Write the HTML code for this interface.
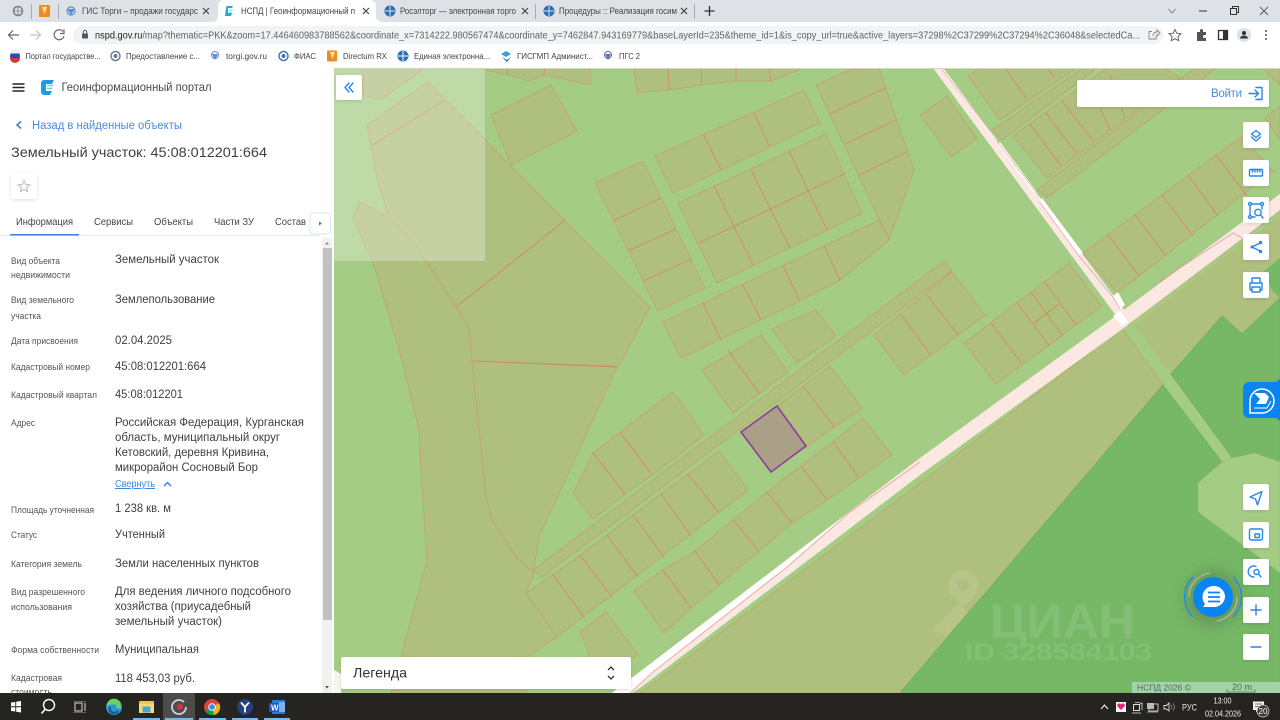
<!DOCTYPE html>
<html><head><meta charset="utf-8"><style>
html,body{margin:0;padding:0;width:1280px;height:720px;overflow:hidden;background:#fff}
svg{display:block;position:absolute;left:0;top:0;filter:blur(.3px)}
text{font-family:"Liberation Sans","Noto Sans CJK SC",sans-serif;white-space:pre}
.p{fill:#afbf7e;stroke:#c4a06c;stroke-width:.8}
.l{stroke:#d18c5c;stroke-width:.9;fill:none}
.lb{font-size:9px;fill:#555}
.v{font-size:11.5px;fill:#3f3f3f}
.t{font-size:10.5px;fill:#444}
.bm{font-size:8.5px;fill:#444}
.tb{font-size:9px;fill:#444}
.btn{fill:#fff}
.ic{fill:none;stroke:#2a86ea;stroke-width:1.4;stroke-linecap:round;stroke-linejoin:round}
</style></head><body>
<svg width="1280" height="720" viewBox="0 0 1280 720" xmlns="http://www.w3.org/2000/svg">
<defs>
<filter id="sh" x="-30%" y="-30%" width="160%" height="160%"><feDropShadow dx="0" dy="1" stdDeviation="1.500" flood-color="#000" flood-opacity=".13"/></filter>
<filter id="sh2" x="-60%" y="-60%" width="220%" height="220%"><feGaussianBlur stdDeviation="9"/></filter>
</defs>

<!-- MAP -->
<g>
<rect x="334" y="68" width="946" height="625" fill="#a5cc85"/>
<!-- large fields -->
<polygon fill="#afbf7e" stroke="#b7ad70" points="640,693 920,483 1122,328 1163,385 900,693"/>
<polygon fill="#afbf7e" points="1133,325 1280,216 1280,298 1242,334 1222,316 1171,374"/>
<polygon fill="#76b866" stroke="#6aa85c" stroke-width=".6" points="1163,385 1222,462 1198,483 1198,512 1280,573 1280,693 900,693"/>
<polygon fill="#76b866" stroke="#6aa85c" stroke-width=".6" points="1171,374 1222,316 1242,334 1280,298 1280,462 1255,453 1232,458"/>
<polygon fill="#76b866" points="1263,272 1280,258 1280,298 1272,290"/>
<polygon fill="#a5cc85" points="1125,326 1133,323 1232,458 1222,462"/>
<polygon fill="#a5cc85" stroke="#92b878" stroke-width=".6" points="1222,462 1232,458 1255,453 1280,462 1280,573 1198,512 1198,483"/>

<!-- parcels -->
<g>
<polygon class="p" points="359,201 353,218 374,265 402,360 419,430 422,487 427,560 401,657 391,693 527,693 527,657 557,637 526,593 534,573 516,557 492,520 486,497 472,360 469,328 456,307 414,243 389,218"/>
<polygon class="p" points="472,361 617,367 539,537 534,568 534,573 516,557 492,520 486,497"/>
<polygon class="p" points="428,82 650,307 619,366 472,361 469,328 456,307 414,243 389,218 377,178 371,146 367,125"/>
<polygon class="p" points="363,68 362,95 381,100 424,68"/>
<polygon class="p" points="491,115 551,85 577,131 511,165"/>
<polygon class="p" points="477,68 507,75 529,81 544,75 591,85 590,68"/>
<polygon class="p" points="634,68 637,93 669,90 702,85 734,81 771,81 799,70 800,68"/>
<polygon class="p" points="595,183 643,161 705,288 658,311"/>
<polygon class="p" points="655,156 804,90 820,123 673,193"/>
<polygon class="p" points="678,203 826,134 862,213 717,283"/>
<polygon class="p" points="816,85 849,70 879,68 914,170 889,240"/>
<polygon class="p" points="663,322 879,220 889,240 840,280 800,301 681,358"/>
<polygon class="p" points="772,329 816,310 836,336 797,363"/>
<polygon class="p" points="702,370 761,335 788,372 733,413"/>
<polygon class="p" points="533,570 944,261 952,271 542,577"/>
<polygon class="p" points="526,593 553,575 580,555 607,535 633,515 661,494 688,474 719,451 748,490 557,637"/>
<polygon class="p" points="573,493 593,453 620,432 673,392 704,435 652,475 625,494 593,519"/>
<polygon class="p" points="777,406 830,366 862,408 806,447"/>
<polygon class="p" points="634,591 663,570 695,551 733,520 767,492 801,466 833,442 863,418 892,455 859,478 827,500 792,523 759,551 719,585 691,608 664,633"/>
<polygon class="p" points="580,632 606,612 638,655 600,680"/>
<polygon class="p" points="874,335 952,272 985,315 904,375"/>
<polygon class="p" points="964,343 1069,263 1102,306 996,384"/>
<polygon class="p" points="920,115 947,96 977,138 951,157"/>
<polygon class="p" points="968,76 980,68 1077,68 1000,120"/>
<polygon class="p" points="992,130 1083,68 1097,68 1002,140"/>
<polygon class="p" points="1013,136 1107,68 1165,68 1180,78 1047,178"/>
<polygon class="p" points="1037,190 1195,68 1217,68 1047,198"/>
<polygon class="p" points="1083,253 1242,136 1273,171 1117,293"/>
<polygon class="p" points="1265,118 1280,106 1280,140"/>
<polygon class="p" points="1225,68 1262,68 1280,85 1280,68"/>
</g>
<g class="l">
<path d="M445,100L371,146M564,221L456,307M472,361L617,367M508,68L507,75M545,68L544,75M669,90L668,68M702,85L701,68M736,81L736,68M771,81L769,68"/>
<path d="M613,221L661,198M628,251L676,229M643,281L691,259M704,135L721,170M754,113L769,146"/>
<path d="M699,243L844,174M714,186L753,265M751,170L790,248M789,151L827,230"/>
<path d="M830,114L885,88M845,144L896,120M859,175L907,152"/>
<path d="M703,303L721,340M743,285L761,320M783,266L800,301M824,246L840,280M728,350L759,393"/>
<path d="M553,575L584,617M580,555L612,597M607,535L638,577M633,515L664,557M661,494L692,537M688,474L719,513"/>
<path d="M593,453L625,494M620,432L652,475M803,386L835,428"/>
<path d="M663,570L691,608M695,551L719,585M733,520L759,551M767,492L792,523M801,466L827,500M833,442L859,478"/>
<path d="M901,315L931,355M927,295L958,335M991,323L1022,364M1017,303L1049,345M1031,292L1062,335M1044,281L1076,325M1034,323L1059,304"/>
<path d="M1005,68L1027,99M1047,68L1055,78M1030,124L1061,166M1046,113L1077,154M1062,101L1093,141M1090,85L1110,130M1110,75L1125,118"/>
<path d="M1108,235L1139,276M1135,215L1166,256M1161,194L1193,236M1188,175L1218,216M1215,154L1247,196"/>
</g>

<!-- thin road -->
<polygon fill="#fbe8e3" points="933,68 943,68 1128,315 1120,321"/>
<polygon fill="#fff" points="941,68 943,68 990,131 988,131"/>
<polygon fill="#fff" points="1000,142 1036,191 1033,192 998,145"/>
<polygon fill="#fff" points="1042,198 1083,253 1079,256 1039,201"/>
<polygon fill="#fff" points="1113,296 1118,292 1125,305 1120,309"/>
<path d="M941,68L990,131M997,141L1035,191M1039,201L1079,256L1113,297L1120,309" stroke="#e58d80" stroke-width=".6" fill="none"/>

<!-- main road -->
<polygon fill="#fbe8e3" points="1280,194 1113,318 920,458 633,677 612,693 632,693 640,688 920,475 1128,325 1280,210"/>
<polygon fill="#fff" points="612,693 633,677 920,458 850,512 787,567 653,672 630,693"/>
<polygon fill="#fff" points="1113,316 1120,311 1128,322 1122,326"/>
<path d="M630,693L653,672L787,567L850,512L920,462M1160,281L1233,233L1242,238" stroke="#e58d80" stroke-width=".7" fill="none"/>
<path d="M1128,325L1280,211" stroke="#d9a27c" stroke-width=".6" fill="none"/>
<polygon fill="#fff" opacity=".85" points="334,670 341,674 341,693 334,693"/>

<!-- target parcel -->
<polygon fill="#aaa087" stroke="#8e3d96" stroke-width="1.600" points="777,406 806,446 771,472 741,432"/>

<!-- overlay -->
<rect x="334" y="68" width="151" height="193" fill="#fff" opacity=".28"/>
<rect x="334" y="68" width="946" height="1" fill="#cfd6c8"/>

<!-- watermark -->
<g fill="#fff" opacity=".1">
<path d="M963,570a15,15 0 0 1 15,15c0,10 -15,22 -15,22s-15,-12 -15,-22a15,15 0 0 1 15,-15zM963,579a6,6 0 1 0 0,12a6,6 0 1 0 0,-12z"/>
<path d="M932,630L958,604L968,612L946,636Z"/>
<text x="990" y="638" font-size="48" font-weight="700" textLength="145" lengthAdjust="spacingAndGlyphs">ЦИАН</text>
<text x="965" y="660" font-size="24" font-weight="700" textLength="187" lengthAdjust="spacingAndGlyphs">ID 328584103</text>
</g>

<!-- attribution -->
<rect x="1132" y="682" width="148" height="11" fill="#b6dcc0" opacity=".75"/>
<text x="1137" y="690.500" font-size="8.500" fill="#4d6a5e" textLength="54" lengthAdjust="spacingAndGlyphs">НСПД 2026 ©</text>
<text x="1232" y="690" font-size="9" fill="#4d6a5e" textLength="20">20 m</text>
<path d="M1227,689V692H1255V689" stroke="#4d6a5e" stroke-width=".7" fill="none"/>

<!-- map buttons -->
<rect class="btn" x="336" y="75" width="26" height="25" rx="2" filter="url(#sh)"/>
<path class="ic" d="M349,83L345,87.500L349,92M353,83L349,87.500L353,92"/>

<rect class="btn" x="1077" y="80" width="192" height="27" rx="2" filter="url(#sh)"/>
<text x="1211" y="97" font-size="11.500" fill="#4c8ae0" textLength="31">Войти</text>
<path class="ic" d="M1249,93.500H1258M1255,90L1258.500,93.500L1255,97M1256,87.500H1262V99.500H1256"/>

<g filter="url(#sh)">
<rect class="btn" x="1243" y="122" width="26" height="26" rx="2"/>
<rect class="btn" x="1243" y="160" width="26" height="26" rx="2"/>
<rect class="btn" x="1243" y="197" width="26" height="26" rx="2"/>
<rect class="btn" x="1243" y="234" width="26" height="26" rx="2"/>
<rect class="btn" x="1243" y="272" width="26" height="26" rx="2"/>
<rect class="btn" x="1243" y="484" width="26" height="26" rx="2"/>
<rect class="btn" x="1243" y="522" width="26" height="26" rx="2"/>
<rect class="btn" x="1243" y="559" width="26" height="26" rx="2"/>
<rect class="btn" x="1243" y="597" width="26" height="26" rx="2"/>
<rect class="btn" x="1243" y="634" width="26" height="26" rx="2"/>
</g>
<path class="ic" stroke-width="1.200" d="M1256,130.500L1260.500,134L1256,137.500L1251.500,134ZM1251.500,137L1256,141L1260.500,137"/>
<rect x="1249.500" y="169.500" width="13" height="6.500" rx="1" class="ic"/>
<path class="ic" stroke-width=".9" d="M1252.500,169.500V172M1255,169.500V172M1257.500,169.500V172M1260,169.500V172"/>
<path class="ic" stroke-width="1" d="M1252,204H1260M1250,206V215M1262,206V209M1252,217H1255"/>
<circle cx="1250" cy="204" r="1.500" class="ic" stroke-width=".9"/><circle cx="1262" cy="204" r="1.500" class="ic" stroke-width=".9"/><circle cx="1250" cy="217" r="1.500" class="ic" stroke-width=".9"/>
<circle cx="1258" cy="212.500" r="3.200" class="ic" stroke-width="1"/><path class="ic" stroke-width="1" d="M1260.500,215L1263,218"/>
<path class="ic" d="M1260,243L1252,247L1260,251"/>
<circle cx="1252" cy="247" r="1.500" fill="#2a86ea"/><circle cx="1260.500" cy="242.500" r="1.700" fill="#2a86ea"/><circle cx="1260.500" cy="251.500" r="1.700" fill="#2a86ea"/>
<path class="ic" d="M1252,283V278H1260V283M1252,290H1250V283H1262V290H1260M1252,287H1260V292H1252Z"/>
<path class="ic" stroke-width="1.200" d="M1262,491.500L1250,497L1255.500,499L1257.500,505Z"/>
<rect x="1249.500" y="529" width="13" height="11" rx="1.500" class="ic"/><rect x="1255" y="534" width="4.500" height="3.500" class="ic" stroke-width="1"/>
<path class="ic" stroke-width="1" d="M1256,566.500A5.500,5.500 0 1 0 1254,577"/><circle cx="1256.500" cy="572" r="2.500" class="ic" stroke-width="1"/><path class="ic" stroke-width="1" d="M1258.500,574L1261,577"/>
<path class="ic" d="M1256,605V615M1251,610H1261"/>
<path class="ic" d="M1251,647H1261"/>

<!-- blue tab -->
<path d="M1249,382H1276L1280,379V421L1276,418H1249a6,6 0 0 1 -6,-6V388a6,6 0 0 1 6,-6z" fill="#0a84f0"/>
<path d="M1250,401a12,12 0 1 1 12,12H1250Z" fill="none" stroke="#fff" stroke-width="1.500"/>
<path d="M1254,393H1265L1269,397L1266,404H1256L1260,399Z" fill="#fff"/>
<path d="M1254,408H1267L1271,401" fill="none" stroke="#fff" stroke-width="1"/>

<!-- chat -->
<circle cx="1213" cy="598" r="26" fill="#333" opacity=".3" filter="url(#sh2)"/>
<path d="M1193,577A28,28 0 0 0 1193,617M1233,577A28,28 0 0 1 1233,617" fill="none" stroke="#1e87f0" stroke-width="1.300"/>
<path d="M1189,597A24,24 0 0 1 1210,573M1237,597A24,24 0 0 1 1217,621" fill="none" stroke="#b3b3a8" stroke-width="1.300"/>
<circle cx="1213" cy="597" r="20" fill="#0a84f0"/>
<path d="M1214,586a11,10.500 0 0 1 0,21H1203l2,-3a11,11 0 0 1 9,-18z" fill="#fff"/>
<path d="M1208,592.500H1220M1208,597H1220M1208,601.500H1220" stroke="#0a84f0" stroke-width="1.700" fill="none"/>

<!-- legend -->
<rect class="btn" x="341" y="657" width="290" height="32" rx="2" filter="url(#sh)"/>
<text x="353" y="677.500" font-size="14" fill="#333" textLength="54" lengthAdjust="spacingAndGlyphs">Легенда</text>
<path d="M608,670L611,667L614,670M608,676L611,679L614,676" fill="none" stroke="#333" stroke-width="1.300"/>
</g>

<!-- LEFT PANEL -->
<rect x="0" y="66" width="334" height="627" fill="#fff"/>
<path d="M12.500,84H24.500M12.500,87.500H24.500M12.500,91H24.500" stroke="#222" stroke-width="1.400"/>
<path d="M44,80H54L52,84H46V91H52L50,95H44a3,3 0 0 1 -3,-3V83a3,3 0 0 1 3,-3Z" fill="#1f9ce8"/>
<path d="M47,85.500H53M47,88.500H52" stroke="#5fd0f5" stroke-width="1.500"/>
<text x="61.500" y="91" font-size="12" fill="#4a4a4a" textLength="150" lengthAdjust="spacingAndGlyphs">Геоинформационный портал</text>
<path d="M21,121.500L17,125L21,128.500" fill="none" stroke="#2d7fe0" stroke-width="1.500"/>
<text x="32" y="129" font-size="11.500" fill="#4c8ae0" textLength="150" lengthAdjust="spacingAndGlyphs">Назад в найденные объекты</text>
<text x="11" y="157" font-size="14" fill="#3f3f3f" textLength="256" lengthAdjust="spacingAndGlyphs">Земельный участок: 45:08:012201:664</text>
<rect x="11" y="173" width="26" height="26" rx="3" fill="#fff" filter="url(#sh)"/>
<path d="M24,180.500L25.700,184.400L29.800,184.800L26.700,187.500L27.600,191.600L24,189.500L20.400,191.600L21.300,187.500L18.200,184.800L22.300,184.400Z" fill="none" stroke="#bbb" stroke-width="1"/>

<text class="t" x="16" y="225" textLength="57" lengthAdjust="spacingAndGlyphs">Информация</text>
<text class="t" x="94" y="225" textLength="39" lengthAdjust="spacingAndGlyphs">Сервисы</text>
<text class="t" x="154" y="225" textLength="39" lengthAdjust="spacingAndGlyphs">Объекты</text>
<text class="t" x="214" y="225" textLength="40" lengthAdjust="spacingAndGlyphs">Части ЗУ</text>
<text class="t" x="275" y="225" textLength="31" lengthAdjust="spacingAndGlyphs">Состав</text>
<rect x="0" y="235" width="320" height="1" fill="#e3e8ee"/>
<rect x="10" y="234" width="69" height="1.500" fill="#3b86e6"/>
<rect x="310" y="213" width="20.500" height="21" rx="3" fill="#fff" stroke="#d6e4f4"/>
<path d="M319,221.500L322,223.500L319,225.500Z" fill="#2d7fe0"/>

<!-- scrollbar -->
<rect x="322" y="238" width="10" height="455" fill="#f1f1f1"/>
<rect x="323" y="248" width="9" height="372" fill="#c1c1c1"/>
<path d="M325,244.500L327,242L329,244.500Z" fill="#888"/>
<path d="M325,686L327,688.500L329,686Z" fill="#555"/>

<!-- rows -->
<g>
<text class="lb" x="11" y="264" textLength="49" lengthAdjust="spacingAndGlyphs">Вид объекта</text>
<text class="lb" x="11" y="278" textLength="59" lengthAdjust="spacingAndGlyphs">недвижимости</text>
<text class="v" x="115" y="263" textLength="104" lengthAdjust="spacingAndGlyphs">Земельный участок</text>
<text class="lb" x="11" y="303" textLength="63" lengthAdjust="spacingAndGlyphs">Вид земельного</text>
<text class="lb" x="11" y="319" textLength="30" lengthAdjust="spacingAndGlyphs">участка</text>
<text class="v" x="115" y="303" textLength="100" lengthAdjust="spacingAndGlyphs">Землепользование</text>
<text class="lb" x="11" y="344" textLength="67" lengthAdjust="spacingAndGlyphs">Дата присвоения</text>
<text class="v" x="115" y="344" textLength="57" lengthAdjust="spacingAndGlyphs">02.04.2025</text>
<text class="lb" x="11" y="370" textLength="79" lengthAdjust="spacingAndGlyphs">Кадастровый номер</text>
<text class="v" x="115" y="370" textLength="91" lengthAdjust="spacingAndGlyphs">45:08:012201:664</text>
<text class="lb" x="11" y="398" textLength="86" lengthAdjust="spacingAndGlyphs">Кадастровый квартал</text>
<text class="v" x="115" y="398" textLength="68" lengthAdjust="spacingAndGlyphs">45:08:012201</text>
<text class="lb" x="11" y="426" textLength="24" lengthAdjust="spacingAndGlyphs">Адрес</text>
<text class="v" x="115" y="426" textLength="189" lengthAdjust="spacingAndGlyphs">Российская Федерация, Курганская</text>
<text class="v" x="115" y="441" textLength="165" lengthAdjust="spacingAndGlyphs">область, муниципальный округ</text>
<text class="v" x="115" y="456" textLength="154" lengthAdjust="spacingAndGlyphs">Кетовский, деревня Кривина,</text>
<text class="v" x="115" y="471" textLength="143" lengthAdjust="spacingAndGlyphs">микрорайон Сосновый Бор</text>
<text x="115" y="487" font-size="10" fill="#3b86e6" text-decoration="underline" textLength="40" lengthAdjust="spacingAndGlyphs">Свернуть</text>
<path d="M164,486L167.500,482.500L171,486" fill="none" stroke="#2d7fe0" stroke-width="1.300"/>
<text class="lb" x="11" y="513" textLength="83" lengthAdjust="spacingAndGlyphs">Площадь уточненная</text>
<text class="v" x="115" y="512" textLength="56" lengthAdjust="spacingAndGlyphs">1 238 кв. м</text>
<text class="lb" x="11" y="538" textLength="26" lengthAdjust="spacingAndGlyphs">Статус</text>
<text class="v" x="115" y="538" textLength="50" lengthAdjust="spacingAndGlyphs">Учтенный</text>
<text class="lb" x="11" y="567" textLength="71" lengthAdjust="spacingAndGlyphs">Категория земель</text>
<text class="v" x="115" y="567" textLength="144" lengthAdjust="spacingAndGlyphs">Земли населенных пунктов</text>
<text class="lb" x="11" y="595" textLength="74" lengthAdjust="spacingAndGlyphs">Вид разрешенного</text>
<text class="lb" x="11" y="610" textLength="61" lengthAdjust="spacingAndGlyphs">использования</text>
<text class="v" x="115" y="595" textLength="176" lengthAdjust="spacingAndGlyphs">Для ведения личного подсобного</text>
<text class="v" x="115" y="610" textLength="136" lengthAdjust="spacingAndGlyphs">хозяйства (приусадебный</text>
<text class="v" x="115" y="625" textLength="107" lengthAdjust="spacingAndGlyphs">земельный участок)</text>
<text class="lb" x="11" y="653" textLength="88" lengthAdjust="spacingAndGlyphs">Форма собственности</text>
<text class="v" x="115" y="653" textLength="84" lengthAdjust="spacingAndGlyphs">Муниципальная</text>
<text class="lb" x="11" y="681" textLength="51" lengthAdjust="spacingAndGlyphs">Кадастровая</text>
<text class="lb" x="11" y="695" textLength="41" lengthAdjust="spacingAndGlyphs">стоимость</text>
<text class="v" x="115" y="682" textLength="80" lengthAdjust="spacingAndGlyphs">118 453,03 руб.</text>
</g>

<!-- BROWSER CHROME -->
<rect x="0" y="0" width="1280" height="22" fill="#dee1e6"/>
<rect x="0" y="22" width="1280" height="44" fill="#fff"/>
<rect x="0" y="66" width="1280" height="2" fill="#fff"/>
<circle cx="18" cy="11" r="4.500" fill="none" stroke="#7a7d82" stroke-width="1.500"/>
<path d="M14,11H22M18,7V15" stroke="#7a7d82" stroke-width=".8"/>
<rect x="31" y="4" width="1" height="15" fill="#a8abb0"/>
<rect x="39" y="5" width="11" height="12" rx="1" fill="#f08c1e"/>
<path d="M42,7L47,7L44.500,14Z" fill="#fbe3b8"/>
<rect x="58" y="4" width="1" height="15" fill="#a8abb0"/>
<!-- active tab -->
<path d="M212,22a6,6 0 0 0 6,-6V6a6,6 0 0 1 6,-6H370a6,6 0 0 1 6,6V16a6,6 0 0 0 6,6Z" fill="#fff"/>
<!-- tab contents -->
<circle cx="71" cy="11" r="4" fill="none" stroke="#5f8fcb" stroke-width="1.200"/><path d="M67,9L71,15L75,9" fill="#5f8fcb"/>
<text class="tb" x="82" y="14" textLength="116" lengthAdjust="spacingAndGlyphs">ГИС Торги – продажи государс</text>
<path d="M203,8L209,14M209,8L203,14" stroke="#444" stroke-width="1.200"/>
<path d="M226,8a2,2 0 0 1 2,-2H233L232,8H228V13H232L231,16H225Z" fill="#1fa6e8"/><path d="M229,10H233M229,12H232" stroke="#6fd8f7" stroke-width="1"/>
<text class="tb" x="241" y="14" textLength="114" lengthAdjust="spacingAndGlyphs">НСПД | Геоинформационный п</text>
<path d="M363,8L369,14M369,8L363,14" stroke="#444" stroke-width="1.200"/>
<circle cx="390" cy="11" r="5.500" fill="#2a6fb5"/><path d="M385,11H395M390,6V16" stroke="#dee1e6" stroke-width="1"/>
<text class="tb" x="400" y="14" textLength="116" lengthAdjust="spacingAndGlyphs">Росэлторг — электронная торго</text>
<path d="M522,8L528,14M528,8L522,14" stroke="#444" stroke-width="1.200"/>
<rect x="535" y="4" width="1" height="15" fill="#a8abb0"/>
<circle cx="549" cy="11" r="5.500" fill="#2a6fb5"/><path d="M544,11H554M549,6V16" stroke="#dee1e6" stroke-width="1"/>
<text class="tb" x="559" y="14" textLength="118" lengthAdjust="spacingAndGlyphs">Процедуры :: Реализация госим</text>
<path d="M681,8L687,14M687,8L681,14" stroke="#444" stroke-width="1.200"/>
<rect x="694" y="4" width="1" height="15" fill="#a8abb0"/>
<path d="M709.500,6V16M704.500,11H714.500" stroke="#333" stroke-width="1.300"/>
<path d="M1168.500,9L1172,13L1175.500,9" fill="none" stroke="#777" stroke-width=".9"/>
<path d="M1199,11H1207" stroke="#333" stroke-width="1"/>
<rect x="1230.500" y="8.500" width="6" height="6" fill="none" stroke="#333" stroke-width="1"/><path d="M1232.500,8.500V6.500H1238.500V12.500H1236.500" fill="none" stroke="#333" stroke-width="1"/>
<path d="M1260,7L1268,15M1268,7L1260,15" stroke="#555" stroke-width=".9"/>

<!-- toolbar -->
<path d="M19,35H9M13,30.500L8.500,35L13,39.500" fill="none" stroke="#666" stroke-width="1.200"/>
<path d="M30,35H40M36,30.500L40.500,35L36,39.500" fill="none" stroke="#c4c4c4" stroke-width="1.200"/>
<path d="M63,31.500A5,5 0 1 0 64,36M64,29.500V33.500H60" fill="none" stroke="#666" stroke-width="1.200"/>
<rect x="73" y="26" width="1090" height="18" rx="9" fill="#f1f3f4"/>
<rect x="82" y="33.500" width="6" height="5" rx=".8" fill="#555"/><path d="M83.300,33.500V32a1.700,1.700 0 0 1 3.400,0V33.500" fill="none" stroke="#555"/>
<text x="95" y="38.500" font-size="10" fill="#5f6368" textLength="1045" lengthAdjust="spacingAndGlyphs"><tspan fill="#202124">nspd.gov.ru</tspan>/map?thematic=PKK&amp;zoom=17.446460983788562&amp;coordinate_x=7314222.980567474&amp;coordinate_y=7462847.943169779&amp;baseLayerId=235&amp;theme_id=1&amp;is_copy_url=true&amp;active_layers=37298%2C37299%2C37294%2C36048&amp;selectedCa...</text>
<path d="M1152,31.500H1149V39H1156V36M1153,36C1153,33 1155,32 1157,32V30L1160,33L1157,36V34" fill="none" stroke="#888" stroke-width=".9"/>
<path d="M1175,29.500L1176.800,33.300L1181,33.800L1178,36.600L1178.700,40.700L1175,38.700L1171.300,40.700L1172,36.600L1169,33.800L1173.200,33.300Z" fill="none" stroke="#666" stroke-width="1"/>
<path d="M1197,32H1200V30.500a1.500,1.500 0 0 1 3,0V32H1206V35H1204.500a1.500,1.500 0 0 0 0,3H1206V41H1197Z" fill="#555"/>
<rect x="1218.500" y="30.500" width="9" height="9" fill="none" stroke="#333" stroke-width="1.300"/><rect x="1223" y="31" width="4" height="8" fill="#333"/>
<circle cx="1244" cy="35" r="7" fill="#dbe1e9"/><circle cx="1244" cy="33" r="2" fill="#333"/><path d="M1240,38.500a4,3 0 0 1 8,0Z" fill="#333"/>
<circle cx="1266" cy="31" r="1" fill="#555"/><circle cx="1266" cy="35" r="1" fill="#555"/><circle cx="1266" cy="39" r="1" fill="#555"/>

<!-- bookmarks -->
<circle cx="15" cy="56" r="5" fill="#2a4fa0"/><path d="M10,53.500a5,5 0 0 1 10,0Z" fill="#eef"/><path d="M10,58a5,5 0 0 0 10,0Z" fill="#d8353a"/>
<text class="bm" x="25.500" y="59" textLength="75" lengthAdjust="spacingAndGlyphs">Портал государстве...</text>
<circle cx="115.500" cy="56" r="4.500" fill="none" stroke="#6a7f96" stroke-width="1.500"/><circle cx="115.500" cy="56" r="2" fill="#6a7f96"/>
<text class="bm" x="126" y="59" textLength="74" lengthAdjust="spacingAndGlyphs">Предоставление с...</text>
<circle cx="215" cy="55" r="3.500" fill="none" stroke="#5f8fcb"/><path d="M212,54L215,60L218,54" fill="#5f8fcb"/>
<text class="bm" x="226" y="59" textLength="41" lengthAdjust="spacingAndGlyphs">torgi.gov.ru</text>
<circle cx="283.500" cy="56" r="4.500" fill="none" stroke="#3d78b8" stroke-width="1.500"/><circle cx="283.500" cy="56" r="2" fill="#3d78b8"/>
<text class="bm" x="294" y="59" textLength="22" lengthAdjust="spacingAndGlyphs">ФИАС</text>
<rect x="327" y="50.500" width="10" height="11" rx="1" fill="#f08c1e"/><path d="M330,52L335,52L332.500,59Z" fill="#fbe3b8"/>
<text class="bm" x="343" y="59" textLength="44" lengthAdjust="spacingAndGlyphs">Directum RX</text>
<circle cx="403" cy="56" r="5.500" fill="#2a6fb5"/><path d="M398,56H408M403,51V61" stroke="#fff" stroke-width="1"/>
<text class="bm" x="414" y="59" textLength="76" lengthAdjust="spacingAndGlyphs">Единая электронна...</text>
<path d="M501,54L506,51L511,54L506,57Z" fill="#3aa0d8"/><path d="M502,57L507,60L511,57L507,62Z" fill="#1c6aa8"/>
<text class="bm" x="517" y="59" textLength="76" lengthAdjust="spacingAndGlyphs">ГИСГМП Админист...</text>
<circle cx="608" cy="55" r="3.500" fill="none" stroke="#5f6fa8"/><path d="M605,54L608,60L611,54" fill="#5f6fa8"/>
<text class="bm" x="619" y="59" textLength="21" lengthAdjust="spacingAndGlyphs">ПГС 2</text>

<!-- TASKBAR -->
<rect x="0" y="693" width="1280" height="27" fill="#262420"/>
<path d="M11,702.500L15.300,702V706.300H11ZM16.200,701.800L21,701V706.300H16.200ZM11,707.200H15.300V711.500L11,711ZM16.200,707.200H21V712.500L16.200,711.700Z" fill="#fff"/>
<circle cx="49" cy="705" r="5.500" fill="none" stroke="#fff" stroke-width="1.400"/><path d="M45,709.500L41.500,713.500" stroke="#fff" stroke-width="1.600"/>
<path d="M75,703H82V711H75ZM85,703V711" fill="none" stroke="#d8d8d8" stroke-width="1"/><path d="M73.500,701.500H86M73.500,712.500H86" stroke="#777" stroke-width=".7"/>
<circle cx="114" cy="707" r="8" fill="#2a9ad6"/><path d="M107,707a7,7 0 0 1 14,-2.500H112a5,5 0 0 0 -5,2.500Z" fill="#69d45d"/><path d="M115,703a5,5 0 0 1 6,4c0,2 -3,2 -4,1" fill="#69d45d"/><path d="M110,707a4.500,4.500 0 0 0 8,4" fill="none" stroke="#165c99" stroke-width="2.500"/>
<rect x="139" y="701" width="15" height="12" rx="1" fill="#f3c548"/><rect x="139" y="704" width="15" height="9" fill="#f8d877"/><rect x="142.500" y="706.500" width="8" height="6" fill="#4aa3d8"/>
<rect x="163" y="693" width="32" height="27" fill="#4e4c48"/>
<circle cx="179" cy="707" r="7" fill="none" stroke="#c8d4ea" stroke-width="1.800"/><circle cx="180" cy="707" r="3" fill="#d8323c"/><path d="M183.500,702.500A7,7 0 0 1 186,707" stroke="#4e4c48" stroke-width="3" fill="none"/>
<circle cx="212" cy="707" r="8" fill="#db4437"/><path d="M212,707L205,711a8,8 0 0 0 9,4Z" fill="#0f9d58"/><path d="M212,707L214,715a8,8 0 0 0 5,-12Z" fill="#f4b400"/><circle cx="212" cy="707" r="3.800" fill="#fff"/><circle cx="212" cy="707" r="2.900" fill="#4285f4"/>
<circle cx="245" cy="707" r="8" fill="#23407d"/><path d="M241,702.500L245,707L249,702.500M245,707V712.500" fill="none" stroke="#fff" stroke-width="1.800"/>
<rect x="272" y="700" width="13" height="14" rx="1" fill="#2b79d8"/><rect x="279" y="702" width="6" height="10" fill="#7fb2ec"/>
<rect x="269" y="703" width="10" height="9" rx="1" fill="#185abd"/>
<text x="271" y="710.500" font-size="8" font-weight="700" fill="#fff">W</text>
<g fill="#76b9ed">
<rect x="133" y="718" width="27" height="2"/><rect x="165" y="718" width="28" height="2"/><rect x="199" y="718" width="27" height="2"/><rect x="232" y="718" width="26" height="2"/><rect x="264" y="718" width="26" height="2"/>
</g>
<!-- tray -->
<path d="M1101,709L1104.500,705L1108,709" fill="none" stroke="#fff" stroke-width="1"/>
<rect x="1116" y="702" width="10" height="10" fill="#e8fff0"/><path d="M1121,710L1117.500,706.500a2,2 0 0 1 3.500,-2a2,2 0 0 1 3.500,2Z" fill="#e0297c"/>
<rect x="1133.500" y="704.500" width="6" height="6" fill="none" stroke="#ddd" stroke-width="1"/><path d="M1135,702.500H1140M1140,704L1142,703V710" fill="none" stroke="#ddd" stroke-width=".8"/><path d="M1132,713H1141" stroke="#ddd" stroke-width=".8"/>
<rect x="1147" y="703" width="7" height="6" fill="#bbb"/><rect x="1149" y="704" width="9" height="7" fill="none" stroke="#bbb" stroke-width="1"/><path d="M1147,712H1158" stroke="#bbb" stroke-width=".8"/>
<path d="M1164,705.500H1166.500L1169,703V711L1166.500,709H1164Z" fill="none" stroke="#ddd" stroke-width=".9"/><path d="M1171,705a3,3 0 0 1 0,4M1173,703.500a5,5 0 0 1 0,7" fill="none" stroke="#999" stroke-width=".8"/>
<text x="1182" y="710.500" font-size="9" fill="#e8e8e8" textLength="15" lengthAdjust="spacingAndGlyphs">РУС</text>
<text x="1213.500" y="703.500" font-size="8.500" fill="#f0f0f0" textLength="18" lengthAdjust="spacingAndGlyphs">13:00</text>
<text x="1205" y="716.500" font-size="8.500" fill="#f0f0f0" textLength="36" lengthAdjust="spacingAndGlyphs">02.04.2026</text>
<path d="M1253,701.500H1264V710H1259L1256,712V710H1253Z" fill="#f4f4f4"/><path d="M1255,704H1262M1255,706.500H1262" stroke="#444" stroke-width=".7"/>
<circle cx="1263" cy="711" r="6" fill="#3a3833" stroke="#d8d8d8" stroke-width=".8"/>
<text x="1258.500" y="714" font-size="8" fill="#fff" textLength="9">20</text>
</svg>
</body></html>
